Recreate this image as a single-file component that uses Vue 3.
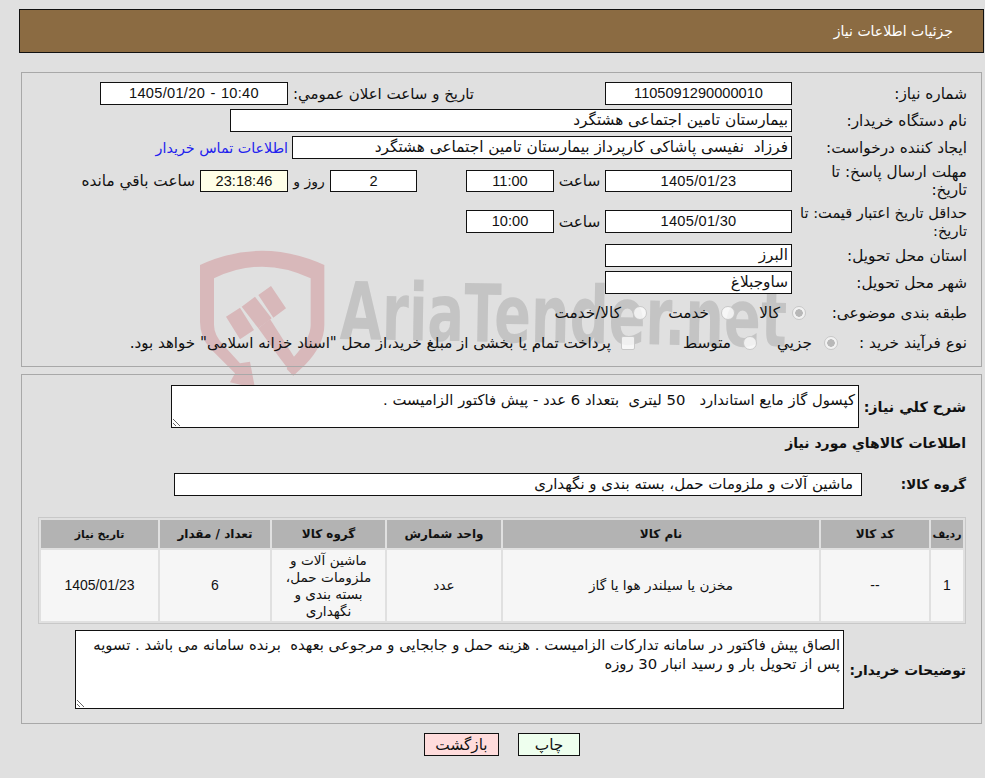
<template>
  <div class="page" dir="rtl">
    <!-- site watermark, sits under the panels -->
    <div class="mark">
      <svg class="shield" width="200" height="145" viewBox="0 0 600 435">
        <path d="M30 60 Q215 -25 403 60 V240 Q403 300 345 360 L310 392 L290 372 L312 335 Q362 280 362 240 V100 Q215 30 72 100 V240 Q72 270 100 300 L150 355 L180 350 L195 430 L120 412 L135 385 L60 310 Q30 275 30 230 Z" fill="#d8b8ba" />
        <path d="M108 215 L150 188 L192 255 L150 283 Z M155 185 L195 155 L245 220 L205 250 Z M205 150 L243 123 L288 190 L250 218 Z" fill="#d8b8ba" />
        <path d="M240 222 L312 335 L310 392 L270 340 L205 250 Z" fill="#d8b8ba" />
      </svg>
      <span class="mark-text">AriaTender.net</span>
    </div>

    <div class="head">جزئيات اطلاعات نياز</div>

    <section class="panel top">
      <div class="row r1">
        <label>شماره نياز:</label>
        <div class="box num mid">1105091290000010</div>
        <span class="lbl announce">تاریخ و ساعت اعلان عمومي:</span>
        <div class="box num ann date">10:40 - 1405/01/20</div>
      </div>
      <div class="row r2">
        <label>نام دستگاه خریدار:</label>
        <div class="box buyer">بیمارستان تامین اجتماعی هشتگرد</div>
      </div>
      <div class="row r2">
        <label>ایجاد کننده درخواست:</label>
        <div class="box creator">فرزاد &nbsp;نفیسی پاشاکی کارپرداز بیمارستان تامین اجتماعی هشتگرد</div>
        <a class="contact">اطلاعات تماس خریدار</a>
      </div>
      <div class="row r3">
        <label>مهلت ارسال پاسخ: تا تاریخ:</label>
        <div class="box num mid date">1405/01/23</div>
        <span class="lbl hour">ساعت</span>
        <div class="box num time">11:00</div>
        <div class="box num days">2</div>
        <span class="lbl and">روز و</span>
        <div class="box num count">23:18:46</div>
        <span class="lbl left">ساعت باقي مانده</span>
      </div>
      <div class="row r4">
        <label>حداقل تاریخ اعتبار قیمت: تا تاریخ:</label>
        <div class="box num mid date">1405/01/30</div>
        <span class="lbl hour">ساعت</span>
        <div class="box num time">10:00</div>
      </div>
      <div class="row r5">
        <label>استان محل تحویل:</label>
        <div class="box mid">البرز</div>
      </div>
      <div class="row r2">
        <label>شهر محل تحویل:</label>
        <div class="box mid">ساوجبلاغ</div>
      </div>
      <div class="row r6">
        <label>طبقه بندی موضوعی:</label>
        <div class="opts kinds">
          <span v-for="k in kinds" :key="k.name" class="opt" :style="{ width: k.w + 'px' }">
            <i class="radio" :class="{ on: k.on }"></i>{{ k.name }}
          </span>
        </div>
      </div>
      <div class="row r7">
        <label>نوع فرآیند خرید :</label>
        <div class="opts buys">
          <span class="opt jozi"><i class="radio on"></i>جزيي</span>
          <span class="opt mot"><i class="radio"></i>متوسط</span>
          <span class="opt pay"><i class="radio sq"></i>پرداخت تمام یا بخشی از مبلغ خرید،از محل "اسناد خزانه اسلامی" خواهد بود.</span>
        </div>
      </div>
    </section>

    <section class="panel bottom">
      <div class="row desc">
        <label class="strong">شرح كلي نياز:</label>
        <textarea class="area small" readonly :value="summary"></textarea>
      </div>
      <h3>اطلاعات كالاهاي مورد نياز</h3>
      <div class="row group">
        <label class="strong">گروه کالا:</label>
        <div class="box group-box">ماشین آلات و ملزومات حمل، بسته بندی و نگهداری</div>
      </div>
      <table class="items">
        <thead>
          <tr>
            <th v-for="c in cols" :key="c.t" :style="{ width: c.w + 'px' }">{{ c.t }}</th>
          </tr>
        </thead>
        <tbody>
          <tr>
            <td class="num">1</td>
            <td class="num">--</td>
            <td>مخزن یا سیلندر هوا یا گاز</td>
            <td>عدد</td>
            <td>ماشین آلات و ملزومات حمل، بسته بندی و نگهداری</td>
            <td class="num">6</td>
            <td class="num">1405/01/23</td>
          </tr>
        </tbody>
      </table>
      <div class="row notes">
        <label class="strong">توضیحات خریدار:</label>
        <textarea class="area large" readonly :value="notes"></textarea>
      </div>
    </section>

    <div class="actions">
      <button class="print">چاپ</button>
      <button class="back">بازگشت</button>
    </div>
  </div>
</template>

<script setup>
const kinds = [
  { name: "کالا", w: 71, on: true },
  { name: "خدمت", w: 88, on: false },
  { name: "کالا/خدمت", w: 90, on: false },
];
const cols = [
  { t: "ردیف", w: 32 },
  { t: "کد کالا", w: 108 },
  { t: "نام کالا", w: 316 },
  { t: "واحد شمارش", w: 114 },
  { t: "گروه کالا", w: 113 },
  { t: "تعداد / مقدار", w: 110 },
  { t: "تاریخ نیاز", w: 117 },
];
const summary = "کپسول گاز مایع استاندارد   50 لیتری  بتعداد 6 عدد - پیش فاکتور الزامیست .";
const notes =
  "الصاق پیش فاکتور در سامانه تدارکات الزامیست . هزینه حمل و جابجایی و مرجوعی بعهده  برنده سامانه می باشد . تسویه پس از تحویل بار و رسید انبار 30 روزه";
</script>

<style>
html,
body {
  margin: 0;
  background: #e0e0e0;
}
</style>

<style scoped>
.page {
  position: relative;
  width: 985px;
  height: 778px;
  overflow: hidden;
  padding-top: 9px;
  box-sizing: border-box;
  background: #e0e0e0;
  color: #111;
  font-family: "DejaVu Sans", "Liberation Sans", sans-serif;
  font-size: 15.3px;
}
.mark {
  position: absolute;
  left: 190px;
  top: 245px;
  width: 620px;
  height: 145px;
}
.shield {
  position: absolute;
  left: 0;
  top: 0;
}
.mark-text {
  position: absolute;
  left: 150px;
  top: 17px;
  direction: ltr;
  font-family: "DejaVu Sans", sans-serif;
  font-weight: 700;
  font-size: 80px;
  line-height: 100px;
  color: #c4c4c4;
  white-space: nowrap;
  transform: rotate(1deg) scaleX(0.68);
  transform-origin: left center;
}
.head {
  position: relative;
  width: 965px;
  height: 44px;
  margin-right: 1px;
  box-sizing: border-box;
  padding-right: 30px;
  background: #8b6b42;
  border: 1px solid #111;
  color: #fff;
  font-size: 14px;
  line-height: 42px;
}
.panel {
  position: relative;
  width: 961px;
  margin-right: 3px;
  box-sizing: border-box;
  border: 1px solid #a8a8a8;
}
.top {
  height: 295px;
  margin-top: 19px;
  padding: 9px 14px 0 0;
}
.bottom {
  height: 350px;
  margin-top: 7px;
  padding: 10px 15px 0 14px;
}
.row {
  display: flex;
  align-items: center;
}
.row > label {
  flex: 0 0 175px;
  box-sizing: border-box;
  line-height: 18px;
}
.r1 {
  height: 23px;
}
.r2 {
  height: 23px;
  margin-top: 4px;
}
.r3 {
  height: 22px;
  margin-top: 11px;
}
.r4 {
  height: 23px;
  margin-top: 18px;
}
.r4 > label {
  font-size: 14.6px;
}
.r5 {
  height: 23px;
  margin-top: 11px;
}
.r6 {
  height: 20px;
  margin-top: 9px;
}
.r7 {
  height: 20px;
  margin-top: 10px;
}
.box {
  position: relative;
  height: 100%;
  box-sizing: border-box;
  border: 1px solid #111;
  background: #fff;
  padding: 0 3px;
  line-height: 20px;
  white-space: nowrap;
  overflow: hidden;
}
.num {
  font-family: "Liberation Sans", sans-serif;
  font-size: 14.6px;
  text-align: center;
}
.date {
  letter-spacing: 0.3px;
}
.mid {
  width: 187px;
}
.ann {
  width: 188px;
  word-spacing: 1px;
}
.lbl {
  position: relative;
  white-space: nowrap;
}
.announce {
  width: 186px;
  margin-right: 131px;
  font-size: 15px;
}
.buyer {
  width: 562px;
}
.creator {
  width: 500px;
}
.contact {
  position: relative;
  margin-right: 4px;
  color: #2222ee;
  font-size: 14.3px;
  white-space: nowrap;
}
.hour {
  width: 51px;
  text-align: center;
}
.time {
  width: 88px;
}
.days {
  width: 87px;
  margin-right: 49px;
}
.and {
  width: 42px;
  font-size: 14px;
  text-align: center;
}
.count {
  width: 88px;
  background: #ffffe8;
}
.left {
  margin-right: 5px;
}
.opts {
  display: flex;
  align-items: center;
}
.opt {
  position: relative;
  display: inline-flex;
  align-items: center;
  white-space: nowrap;
}
.pay {
  font-size: 15.1px;
}
.kinds {
  margin-right: -14px;
}
.buys {
  margin-right: -46px;
}
.jozi {
  width: 81px;
}
.mot {
  width: 122px;
}
.radio {
  flex: none;
  width: 14px;
  height: 14px;
  box-sizing: border-box;
  margin-left: 12px;
  border: 1px solid #c8c8c8;
  border-radius: 50%;
  background: rgba(255, 255, 255, 0.75);
}
.radio.on {
  background: radial-gradient(circle, #b8b8b8 0 3.5px, #f2f2f2 4px);
}
.radio.sq {
  margin-left: 10px;
  border-radius: 2px;
  background: rgba(255, 255, 255, 0.75);
}
.strong {
  font-weight: 700;
  font-size: 14.3px;
}
.desc > .strong {
  flex-basis: 107px;
}
.group > .strong {
  flex-basis: 104px;
  font-size: 13.4px;
}
.notes > .strong {
  flex-basis: 122px;
  font-size: 13.8px;
}
.area {
  display: block;
  box-sizing: border-box;
  border: 1px solid #111;
  border-radius: 0;
  background: #fff;
  color: #111;
  font-family: "DejaVu Sans", "Liberation Sans", sans-serif;
  font-size: 14.8px;
  line-height: 19px;
  padding: 4px 3px;
  margin: 0;
  outline: none;
  overflow: hidden;
}
.small {
  width: 688px;
  height: 43px;
}
.large {
  width: 769px;
  height: 79px;
}
h3 {
  position: relative;
  margin: 5px 0 0;
  font-size: 14px;
  line-height: 20px;
  font-weight: 700;
}
.group {
  height: 23px;
  margin-top: 20px;
}
.group-box {
  width: 688px;
  padding-right: 8px;
  font-size: 15px;
}
.items {
  position: relative;
  width: 928px;
  margin-top: 21px;
  table-layout: fixed;
  border: 1px solid #c8c8c8;
  border-spacing: 2px;
}
th {
  height: 28px;
  padding: 0;
  background: #b3b3b3;
  font-size: 12px;
  font-weight: 700;
}
th:first-child,
th:last-child {
  font-size: 11px;
}
td {
  height: 71px;
  padding: 0 10px;
  box-sizing: border-box;
  background: #f6f6f6;
  text-align: center;
  font-size: 13.6px;
  line-height: 17px;
}
td.num {
  font-size: 14px;
}
.notes {
  margin-top: 6px;
}
.actions {
  position: relative;
  display: flex;
  justify-content: center;
  gap: 19px;
  margin-top: 9px;
  padding-left: 19px;
}
button {
  height: 23px;
  padding: 0;
  border: 1px solid #111;
  color: #111;
  font-family: "DejaVu Sans", "Liberation Sans", sans-serif;
  font-size: 15.3px;
  line-height: 20px;
}
.print {
  width: 62px;
  background: #eeffee;
}
.back {
  width: 75px;
  background: #ffdcdc;
}
</style>
